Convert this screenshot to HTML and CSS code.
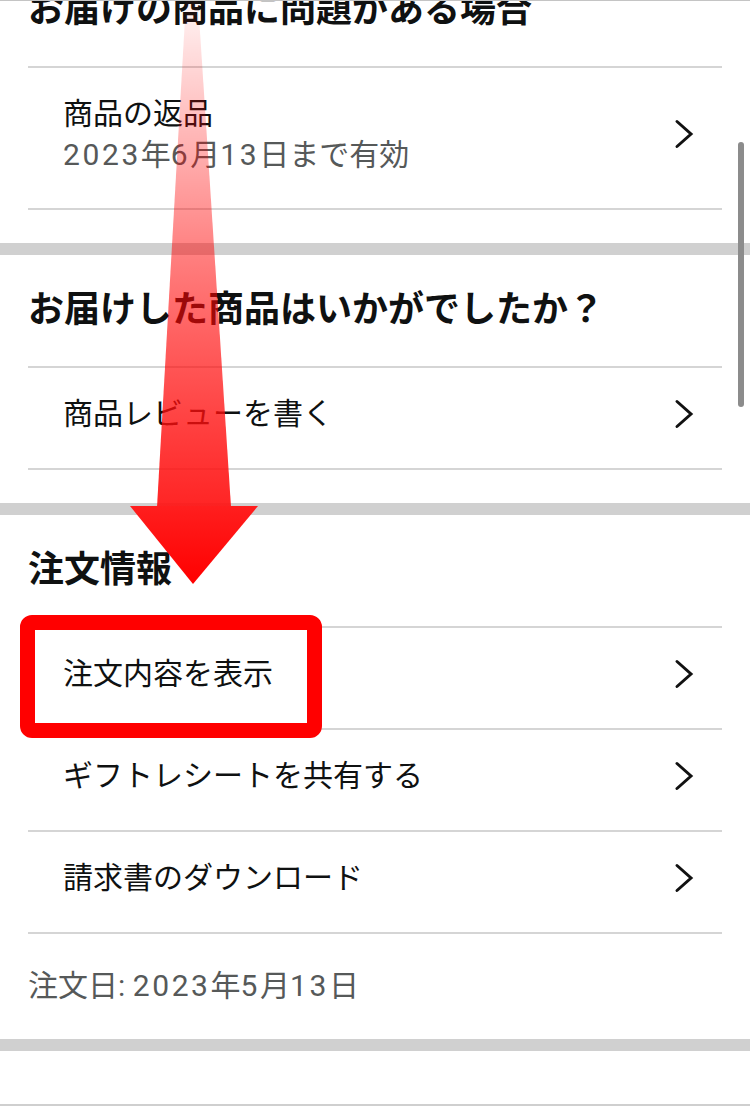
FILE: index.html
```html
<!DOCTYPE html>
<html lang="ja">
<head>
<meta charset="utf-8">
<title>注文の詳細</title>
<link rel="stylesheet" href="styles.css">
</head>
<body>
<div class="screen">
  <main class="feed">
    <section class="card">
      <h2 class="card-title">お届けの商品に問題がある場合</h2>
      <ul class="menu">
        <li class="menu-item">
          <div class="item-text">
            <span class="item-label">商品の返品</span>
            <span class="item-sub"><span class="num">2023</span>年<span class="num">6</span>月<span class="num">13</span>日まで有効</span>
          </div>
          <svg class="chevron" viewBox="0 0 20 30" aria-hidden="true"><path d="M3 2.5 L17 15 L3 27.5"/></svg>
        </li>
      </ul>
    </section>

    <section class="card">
      <h2 class="card-title">お届けした商品はいかがでしたか？</h2>
      <ul class="menu">
        <li class="menu-item">
          <div class="item-text"><span class="item-label">商品レビューを書く</span></div>
          <svg class="chevron" viewBox="0 0 20 30" aria-hidden="true"><path d="M3 2.5 L17 15 L3 27.5"/></svg>
        </li>
      </ul>
    </section>

    <section class="card card-last">
      <h2 class="card-title">注文情報</h2>
      <ul class="menu">
        <li class="menu-item">
          <div class="item-text"><span class="item-label">注文内容を表示</span></div>
          <svg class="chevron" viewBox="0 0 20 30" aria-hidden="true"><path d="M3 2.5 L17 15 L3 27.5"/></svg>
        </li>
        <li class="menu-item">
          <div class="item-text"><span class="item-label">ギフトレシートを共有する</span></div>
          <svg class="chevron" viewBox="0 0 20 30" aria-hidden="true"><path d="M3 2.5 L17 15 L3 27.5"/></svg>
        </li>
        <li class="menu-item">
          <div class="item-text"><span class="item-label">請求書のダウンロード</span></div>
          <svg class="chevron" viewBox="0 0 20 30" aria-hidden="true"><path d="M3 2.5 L17 15 L3 27.5"/></svg>
        </li>
      </ul>
      <p class="order-date">注文日: <span class="num">2023</span>年<span class="num">5</span>月<span class="num">13</span>日</p>
    </section>
  </main>

  <div class="scrollbar"></div>

  <svg class="guide-arrow" width="260" height="590" viewBox="0 0 260 590" aria-hidden="true">
    <defs>
      <linearGradient id="shaftFade" x1="0" y1="0" x2="0" y2="1">
        <stop offset="0" stop-color="#ff0000" stop-opacity="0.04"/>
        <stop offset="0.5" stop-color="#ff0000" stop-opacity="0.5"/>
        <stop offset="1" stop-color="#ff1414" stop-opacity="0.93"/>
      </linearGradient>
      <linearGradient id="headFill" x1="0" y1="0" x2="0" y2="1">
        <stop offset="0" stop-color="#ff1e1e"/>
        <stop offset="1" stop-color="#ff0000"/>
      </linearGradient>
    </defs>
    <polygon points="186,0 198,0 231,506 157,506" fill="url(#shaftFade)"/>
    <polygon points="130,505 258,505 193,583" fill="url(#headFill)"/>
  </svg>

  <div class="focus-ring"></div>
</div>
</body>
</html>
```

FILE: styles.css
```css
html, body {
  margin: 0;
  padding: 0;
  background: #ffffff;
}

body {
  font-family: Roboto, "Noto Sans CJK JP", sans-serif;
  color: #0f1111;
}

.screen {
  position: relative;
  width: 750px;
  height: 1106px;
  box-sizing: border-box;
  overflow: hidden;
  border-top: 1px solid #c4c4c4;
  border-bottom: 2px solid #cfcfcf;
  background: #ffffff;
}

/* content is scrolled so the first heading sits partly above the fold */
.feed {
  margin-top: -46px;
}

.card {
  padding: 0 28px 33px;
  background: #ffffff;
}

.card + .card {
  border-top: 12px solid #d0d0d0;
}

.card-last {
  padding-bottom: 0;
  border-bottom: 12px solid #d0d0d0;
}

.card-title {
  margin: 0;
  height: 111px;
  line-height: 111px;
  font-size: 36px;
  font-weight: 700;
  color: #0f1111;
  white-space: nowrap;
}

.menu {
  list-style: none;
  margin: 0;
  padding: 0;
  border-bottom: 2px solid #d5d5d5;
}

.menu-item {
  display: flex;
  align-items: center;
  justify-content: space-between;
  border-top: 2px solid #d5d5d5;
  padding: 25px 28px 33px 35px;
}

.item-text {
  display: flex;
  flex-direction: column;
}

.item-label {
  font-size: 30px;
  line-height: 42px;
  color: #0f1111;
}

.item-sub {
  font-size: 30px;
  line-height: 40px;
  color: #565959;
}

.num {
  letter-spacing: 2.6px;
}

.chevron {
  width: 20px;
  height: 30px;
  flex: none;
}

.chevron path {
  fill: none;
  stroke: #111111;
  stroke-width: 3;
  stroke-linecap: round;
  stroke-linejoin: miter;
}

.order-date {
  margin: 0;
  padding: 31px 0 32px;
  font-size: 30px;
  line-height: 42px;
  color: #565959;
}

/* overlay scroll indicator */
.scrollbar {
  position: absolute;
  top: 141px;
  right: 6px;
  width: 6px;
  height: 265px;
  border-radius: 3px;
  background: #8c8c8c;
}

/* annotation overlays */
.guide-arrow {
  position: absolute;
  left: 0;
  top: 0;
}

.focus-ring {
  position: absolute;
  left: 20px;
  top: 614px;
  width: 302px;
  height: 123px;
  box-sizing: border-box;
  border: 15px solid #ff0000;
  border-radius: 12px;
}
```
